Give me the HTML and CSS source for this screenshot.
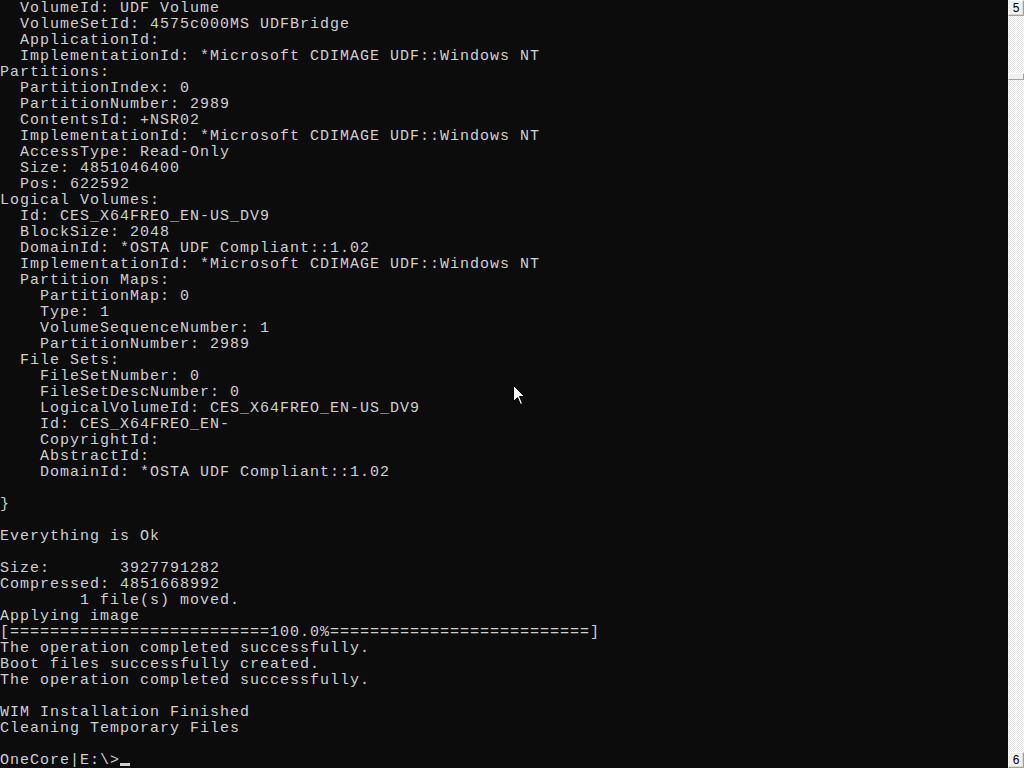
FILE: index.html
```html
<!DOCTYPE html>
<html>
<head>
<meta charset="utf-8">
<link rel="stylesheet" href="styles.css">
</head>
<body>
<div class="window">
<pre class="console">  VolumeId: UDF Volume
  VolumeSetId: 4575c000MS UDFBridge
  ApplicationId:
  ImplementationId: *Microsoft CDIMAGE UDF::Windows NT
Partitions:
  PartitionIndex: 0
  PartitionNumber: 2989
  ContentsId: +NSR02
  ImplementationId: *Microsoft CDIMAGE UDF::Windows NT
  AccessType: Read-Only
  Size: 4851046400
  Pos: 622592
Logical Volumes:
  Id: CES_X64FREO_EN-US_DV9
  BlockSize: 2048
  DomainId: *OSTA UDF Compliant::1.02
  ImplementationId: *Microsoft CDIMAGE UDF::Windows NT
  Partition Maps:
    PartitionMap: 0
    Type: 1
    VolumeSequenceNumber: 1
    PartitionNumber: 2989
  File Sets:
    FileSetNumber: 0
    FileSetDescNumber: 0
    LogicalVolumeId: CES_X64FREO_EN-US_DV9
    Id: CES_X64FREO_EN-
    CopyrightId:
    AbstractId:
    DomainId: *OSTA UDF Compliant::1.02

}

Everything is Ok

Size:       3927791282
Compressed: 4851668992
        1 file(s) moved.
Applying image
[==========================100.0%==========================]
The operation completed successfully.
Boot files successfully created.
The operation completed successfully.

WIM Installation Finished
Cleaning Temporary Files

OneCore|E:\&gt;<span class="caret"></span></pre>
<div class="scrollbar">
<div class="sb-btn">5</div>
<div class="sb-track"><div class="sb-thumb"></div></div>
<div class="sb-btn">6</div>
</div>
</div>
<svg class="pointer" width="13" height="21" viewBox="0 0 13 21">
<path d="M0.5 0.5 L0.5 16.5 L4.5 12.5 L7.5 19.5 L9.5 18.5 L6.5 11.5 L11.5 11.5 Z" fill="#fff" stroke="#000" stroke-width="1"/>
</svg>
</body>
</html>
```

FILE: styles.css
```css
html, body {
  margin: 0;
  padding: 0;
  background: #0c0c0c;
}
.window {
  display: flex;
  width: 1024px;
  height: 768px;
  overflow: hidden;
}
.console {
  flex: 1;
  margin: 0;
  padding: 1px 0 0 0;
  font-family: "Liberation Mono", monospace;
  font-size: 15px;
  letter-spacing: 1px;
  line-height: 16px;
  color: #d0d0d0;
  white-space: pre;
  overflow: hidden;
}
.caret {
  display: inline-block;
  width: 10px;
  height: 16px;
  vertical-align: top;
  background: linear-gradient(to bottom, transparent 10px, #d0d0d0 10px, #d0d0d0 13px, transparent 13px);
}
.scrollbar {
  width: 16px;
  display: flex;
  flex-direction: column;
  background: repeating-conic-gradient(#ffffff 0 25%, #e8e8e8 0 50%) 0 0 / 2px 2px;
}
.sb-btn {
  height: 16px;
  box-sizing: border-box;
  background: #f0f0f0;
  border-top: 1px solid #ffffff;
  border-left: 1px solid #ffffff;
  border-right: 1px solid #a0a0a0;
  border-bottom: 1px solid #a0a0a0;
  box-shadow: inset -1px -1px 0 #d8d8d8;
  font-family: "Liberation Sans", sans-serif;
  font-size: 12px;
  line-height: 14px;
  text-align: center;
  color: #000;
}
.sb-track {
  flex: 1;
  padding-top: 57px;
}
.sb-thumb {
  height: 7px;
  box-sizing: border-box;
  background: #f0f0f0;
  border-top: 1px solid #ffffff;
  border-left: 1px solid #ffffff;
  border-right: 1px solid #a0a0a0;
  border-bottom: 1px solid #a0a0a0;
}
.pointer {
  position: absolute;
  left: 513px;
  top: 385px;
}
```
